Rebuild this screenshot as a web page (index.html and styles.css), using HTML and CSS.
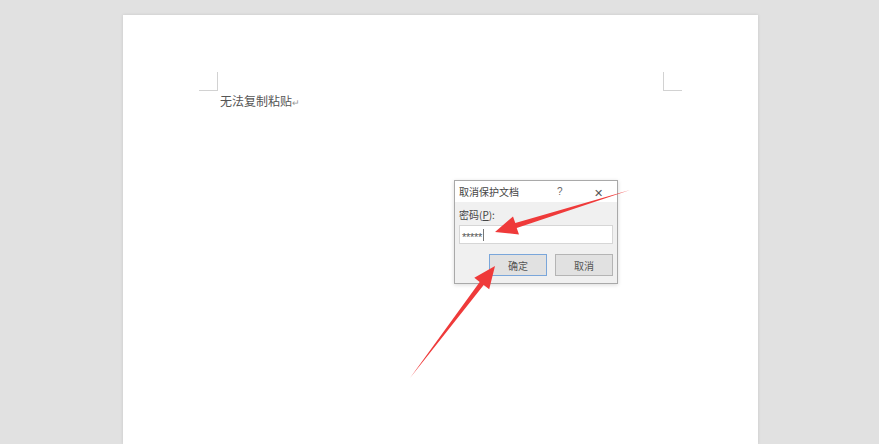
FILE: index.html
```
<!DOCTYPE html>
<html lang="zh-CN">
<head>
    <meta charset="UTF-8">
    <title>取消保护文档</title>
    <link rel="stylesheet" href="styles.css">
</head>
<body>
<div class="page">
    <div class="marks">
        <div class="corner corner-left"></div>
        <div class="corner corner-right"></div>
    </div>
    <p class="line">无法复制粘贴<span class="ret">↵</span></p>

    <div class="dialog">
        <div class="title-bar">
            <span class="title">取消保护文档</span>
            <span class="help">?</span>
            <span class="close">✕</span>
        </div>
        <div class="dialog-body">
            <label class="label">密码(<u>P</u>):</label>
            <div class="input"><span class="stars">*****</span><span class="caret"></span></div>
            <div class="buttons">
                <button class="btn btn-ok">确定</button>
                <button class="btn">取消</button>
            </div>
        </div>
    </div>
</div>

<svg class="arrows" width="879" height="444" viewBox="0 0 879 444">
    <polygon points="630,190 515.3,223.1 513,216.5 495,232 519,234.5 516.7,227.9" fill="#ef3a3a"/>
    <polygon points="410,378 479.7,282 474.3,277.8 495,266 489.2,289.2 483.7,285" fill="#ef3a3a"/>
</svg>
</body>
</html>
```
FILE: styles.css
```
body{
    margin: 0;
    background: #e1e1e1;
    font-family: "Noto Sans CJK SC", "Liberation Sans", sans-serif;
    overflow: hidden;
}
.page{
    position: relative;
    width: 635px;
    height: 429px;
    margin: 15px 0 0 123px;
    background: #fff;
    box-shadow: 0 0 3px rgba(0,0,0,0.12);
}
.marks{
    display: flex;
    justify-content: space-between;
    padding: 57px 76px 0;
}
.corner{
    width: 18px;
    height: 18px;
    border-bottom: 1px solid #d2d2d2;
}
.corner-left{ border-right: 1px solid #d2d2d2; }
.corner-right{ border-left: 1px solid #d2d2d2; }
.line{
    margin: 2px 0 0 97px;
    font-size: 12px;
    line-height: 16px;
    color: #555;
}
.ret{
    font-size: 9px;
    color: #999;
}

.dialog{
    position: absolute;
    left: 331px;
    top: 165px;
    width: 162px;
    height: 102px;
    border: 1px solid #a9a9a9;
    box-shadow: 0 1px 4px rgba(0,0,0,0.15);
    background: #f0f0f0;
    display: flex;
    flex-direction: column;
}
.title-bar{
    height: 21px;
    background: #fff;
    display: flex;
    align-items: center;
    padding: 0 8px 0 4px;
    font-size: 10px;
    color: #444;
}
.title{ flex: 1; }
.help{
    width: 30px;
    color: #666;
    font-family: "Liberation Sans", sans-serif;
    font-size: 10px;
}
.close{
    width: 22px;
    text-align: center;
    font-size: 11px;
    color: #555;
}
.dialog-body{
    padding: 6px 4px 0 4px;
    display: flex;
    flex-direction: column;
}
.label{
    font-size: 10px;
    color: #444;
    line-height: 14px;
}
.input{
    margin-top: 3px;
    height: 17px;
    background: #fff;
    border: 1px solid #d6d6d6;
    display: flex;
    align-items: center;
    padding-left: 2px;
}
.stars{
    font-family: "Liberation Sans", sans-serif;
    font-size: 11px;
    color: #555;
    letter-spacing: -0.3px;
    margin-top: 4px;
}
.caret{
    width: 1px;
    height: 12px;
    background: #777;
    margin-left: 1px;
}
.buttons{
    display: flex;
    justify-content: flex-end;
    gap: 8px;
    margin-top: 10px;
}
.btn{
    width: 58px;
    height: 22px;
    border: 1px solid #b4b4b4;
    background: #e1e1e1;
    font-family: "Noto Sans CJK SC", sans-serif;
    font-size: 10px;
    color: #555;
    padding: 0;
}
.btn-ok{
    border-color: #7aa6da;
}
.arrows{
    position: absolute;
    left: 0;
    top: 0;
}
```
